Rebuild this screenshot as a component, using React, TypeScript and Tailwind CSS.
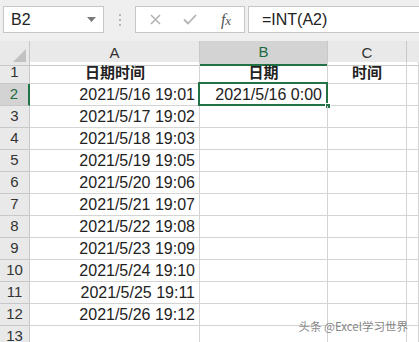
import React from "react";

const rows = [
  "2021/5/16 19:01",
  "2021/5/17 19:02",
  "2021/5/18 19:03",
  "2021/5/19 19:05",
  "2021/5/20 19:06",
  "2021/5/21 19:07",
  "2021/5/22 19:08",
  "2021/5/23 19:09",
  "2021/5/24 19:10",
  "2021/5/25 19:11",
  "2021/5/26 19:12",
];

const cols = "grid grid-cols-[30px_170px_128px_79px_1fr]";
const cell = "h-[22px] border-r border-b border-[#d4d4d4] flex items-center";
const rowHead = "h-[22px] border-r border-b border-[#c8c8c8] bg-[#e9e9e9] flex items-center justify-center text-[15px] text-[#333]";

function Toolbar() {
  return (
    <div className="flex h-[41px] items-start bg-[#efefef] pt-[6px]">
      <div className="ml-[3px] flex h-[27px] w-[101px] items-center justify-between border border-[#c6c6c6] bg-white pl-[7px] pr-[7px] text-[16px] text-[#222]">
        <span>B2</span>
        <svg width="9" height="5" viewBox="0 0 9 5">
          <path d="M0 0h9L4.5 5z" fill="#7a7a7a" />
        </svg>
      </div>
      <div className="flex w-[31px] flex-col items-center gap-[3px] pt-[8px]">
        <span className="h-[2px] w-[2px] bg-[#b5b5b5]" />
        <span className="h-[2px] w-[2px] bg-[#b5b5b5]" />
        <span className="h-[2px] w-[2px] bg-[#b5b5b5]" />
      </div>
      <div className="flex h-[27px] w-[110px] items-center border border-[#c6c6c6] bg-white">
        <div className="flex w-[36px] justify-center pl-[2px]">
          <svg width="11" height="11" viewBox="0 0 11 11">
            <path d="M1 1l9 9M10 1l-9 9" stroke="#b3b3b3" strokeWidth="1.6" />
          </svg>
        </div>
        <div className="flex w-[36px] justify-center">
          <svg width="14" height="11" viewBox="0 0 14 11">
            <path d="M1 5.5l4 4L13 1" stroke="#b3b3b3" strokeWidth="1.8" fill="none" />
          </svg>
        </div>
        <div className="flex w-[36px] justify-center font-['Liberation_Serif'] text-[16px] italic text-[#555]">
          <span>f<span className="text-[13px]">x</span></span>
        </div>
      </div>
      <div className="ml-[3px] flex h-[27px] flex-1 items-center border border-r-0 border-[#c6c6c6] bg-white pl-[13px] text-[16px] text-[#222]">
        =INT(A2)
      </div>
    </div>
  );
}

function HeaderRow() {
  return (
    <div className={`${cols} h-[21px] bg-[#e9e9e9] text-[15px] text-[#333]`}>
      <div className="relative border-r border-b border-[#c8c8c8]">
        <svg className="absolute bottom-[3px] right-[3px]" width="13" height="13" viewBox="0 0 13 13">
          <path d="M13 0V13H0z" fill="#c2c2c2" />
        </svg>
      </div>
      <div className="flex items-center justify-center border-r border-b border-[#c8c8c8]">A</div>
      <div className="flex items-center justify-center border-r border-b-2 border-r-[#c8c8c8] border-b-[#217346] bg-[#d3d3d3] text-[#1e6b40]">B</div>
      <div className="flex items-center justify-center border-r border-b border-[#c8c8c8]">C</div>
      <div className="border-b border-[#c8c8c8]" />
    </div>
  );
}

export default function App() {
  return (
    <div className="relative h-[342px] w-[419px] overflow-hidden bg-white font-['Liberation_Sans','Noto_Sans_CJK_SC',sans-serif]">
      <Toolbar />
      <HeaderRow />
      <div className={`${cols} text-[#222]`}>
        <div className={rowHead}>1</div>
        <div className={`${cell} justify-center pl-[1px] font-['Noto_Sans_CJK_SC'] text-[15px] font-bold`}>日期时间</div>
        <div className={`${cell} justify-center font-['Noto_Sans_CJK_SC'] text-[15px] font-bold`}>日期</div>
        <div className={`${cell} justify-center font-['Noto_Sans_CJK_SC'] text-[15px] font-bold`}>时间</div>
        <div className={cell} />
        {rows.map((d, i) => (
          <React.Fragment key={d}>
            <div
              className={
                i === 0
                  ? "flex h-[22px] items-center justify-center border-r-2 border-b border-r-[#217346] border-b-[#c8c8c8] bg-[#d3d3d3] text-[15px] text-[#1e6b40]"
                  : rowHead
              }
            >
              {i + 2}
            </div>
            <div className={`${cell} justify-end pr-[4px] text-[16px]`}>{d}</div>
            <div className={`${cell} relative justify-end pr-[5px] text-[16px]`}>
              {i === 0 && (
                <>
                  2021/5/16 0:00
                  <div className="absolute inset-[-2px_-1px_-1px_-2px] border-2 border-[#217346]" />
                  <div className="absolute bottom-[-4px] right-[-4px] h-[6px] w-[6px] border border-white bg-[#217346]" />
                </>
              )}
            </div>
            <div className={cell} />
            <div className={cell} />
          </React.Fragment>
        ))}
        <div className={rowHead}>13</div>
        <div className={cell} />
        <div className={cell} />
        <div className={cell} />
        <div className={cell} />
      </div>
      <div className="absolute bottom-[7px] right-[11px] font-['Noto_Sans_CJK_SC'] text-[11.5px] text-[#666]/80">
        头条 @Excel学习世界
      </div>
    </div>
  );
}
